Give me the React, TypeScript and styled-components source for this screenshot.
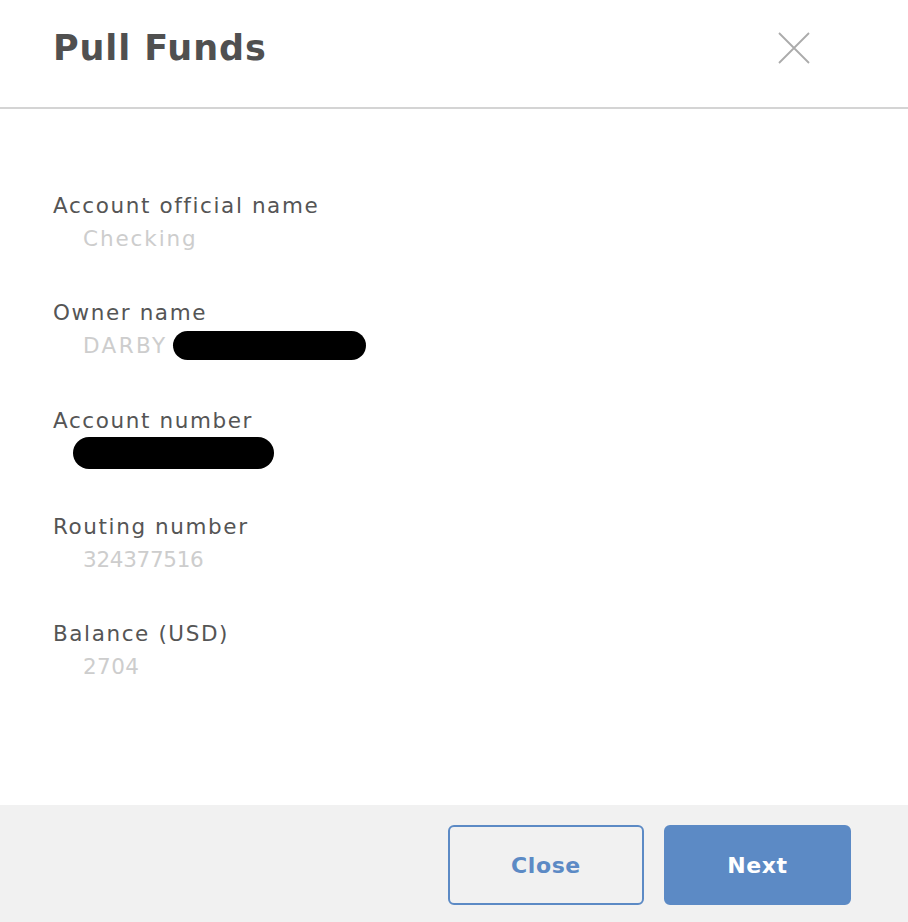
import React from "react";
import styled, { createGlobalStyle } from "styled-components";

const Global = createGlobalStyle`
  html, body { margin: 0; padding: 0; background: #ffffff; }
  body { font-family: "DejaVu Sans", "Open Sans", sans-serif; }
  * { box-sizing: border-box; }
`;

const Modal = styled.div`
  width: 908px;
  height: 922px;
  display: flex;
  flex-direction: column;
  background: #ffffff;
`;

const Header = styled.header`
  height: 109px;
  flex: none;
  display: flex;
  align-items: center;
  justify-content: space-between;
  padding: 0 98px 12px 53px;
  border-bottom: 2px solid #d4d4d4;
`;

const Title = styled.h1`
  margin: 0;
  font-size: 35px;
  font-weight: 600;
  color: #505050;
  letter-spacing: 0.9px;
`;

const CloseIcon = styled.button`
  width: 32px;
  height: 32px;
  padding: 0;
  border: 0;
  background: transparent;
  display: flex;
  align-items: center;
  justify-content: center;
`;

const Body = styled.main`
  flex: 1;
  display: flex;
  flex-direction: column;
  gap: 41.3px;
  padding: 80px 53px 0;
`;

const Field = styled.div`
  display: flex;
  flex-direction: column;
`;

const Label = styled.div`
  font-size: 21.5px;
  line-height: 33px;
  color: #555555;
  letter-spacing: 1.6px;
`;

const Value = styled.div<{ $spacing: number }>`
  font-size: 21.5px;
  line-height: 33px;
  color: #cdcdcd;
  letter-spacing: ${(p) => p.$spacing}px;
  padding-left: 30px;
  display: flex;
  align-items: center;
`;

const Redaction = styled.span<{ $w: number; $h: number; $shift?: number }>`
  display: inline-block;
  width: ${(p) => p.$w}px;
  height: ${(p) => p.$h}px;
  margin-left: ${(p) => p.$shift ?? 0}px;
  background: #000000;
  border-radius: 16px;
`;

const Footer = styled.footer`
  height: 117px;
  flex: none;
  background: #f1f1f1;
  display: flex;
  justify-content: flex-end;
  align-items: flex-start;
  gap: 20px;
  padding: 20px 57px 0 0;
`;

const Button = styled.button<{ $primary?: boolean; $w: number }>`
  width: ${(p) => p.$w}px;
  height: 80px;
  border-radius: 6px;
  font-family: "DejaVu Sans", "Open Sans", sans-serif;
  font-size: 22px;
  font-weight: 600;
  letter-spacing: 0.6px;
  border: 2px solid #5c8ac5;
  background: ${(p) => (p.$primary ? "#5c8ac5" : "transparent")};
  color: ${(p) => (p.$primary ? "#ffffff" : "#5c8ac5")};
  cursor: pointer;
`;

const fields: { label: string; spacing: number; value: React.ReactNode }[] = [
  { label: "Account official name", spacing: 1.9, value: "Checking" },
  {
    label: "Owner name",
    spacing: 2.4,
    value: (
      <>
        DARBY
        <Redaction $w={193} $h={29} $shift={5} />
      </>
    ),
  },
  { label: "Account number", spacing: 0, value: <Redaction $w={201} $h={32} $shift={-10} /> },
  { label: "Routing number", spacing: -0.3, value: "324377516" },
  { label: "Balance (USD)", spacing: 0.4, value: "2704" },
];

export default function App() {
  return (
    <>
      <Global />
      <Modal>
        <Header>
          <Title>Pull Funds</Title>
          <CloseIcon aria-label="close">
            <svg width="32" height="32" viewBox="0 0 32 32">
              <path d="M1 1 L31 31 M31 1 L1 31" stroke="#ababab" strokeWidth="1.8" fill="none" />
            </svg>
          </CloseIcon>
        </Header>
        <Body>
          {fields.map((f) => (
            <Field key={f.label}>
              <Label>{f.label}</Label>
              <Value $spacing={f.spacing}>{f.value}</Value>
            </Field>
          ))}
        </Body>
        <Footer>
          <Button $w={196}>Close</Button>
          <Button $primary $w={187}>Next</Button>
        </Footer>
      </Modal>
    </>
  );
}
